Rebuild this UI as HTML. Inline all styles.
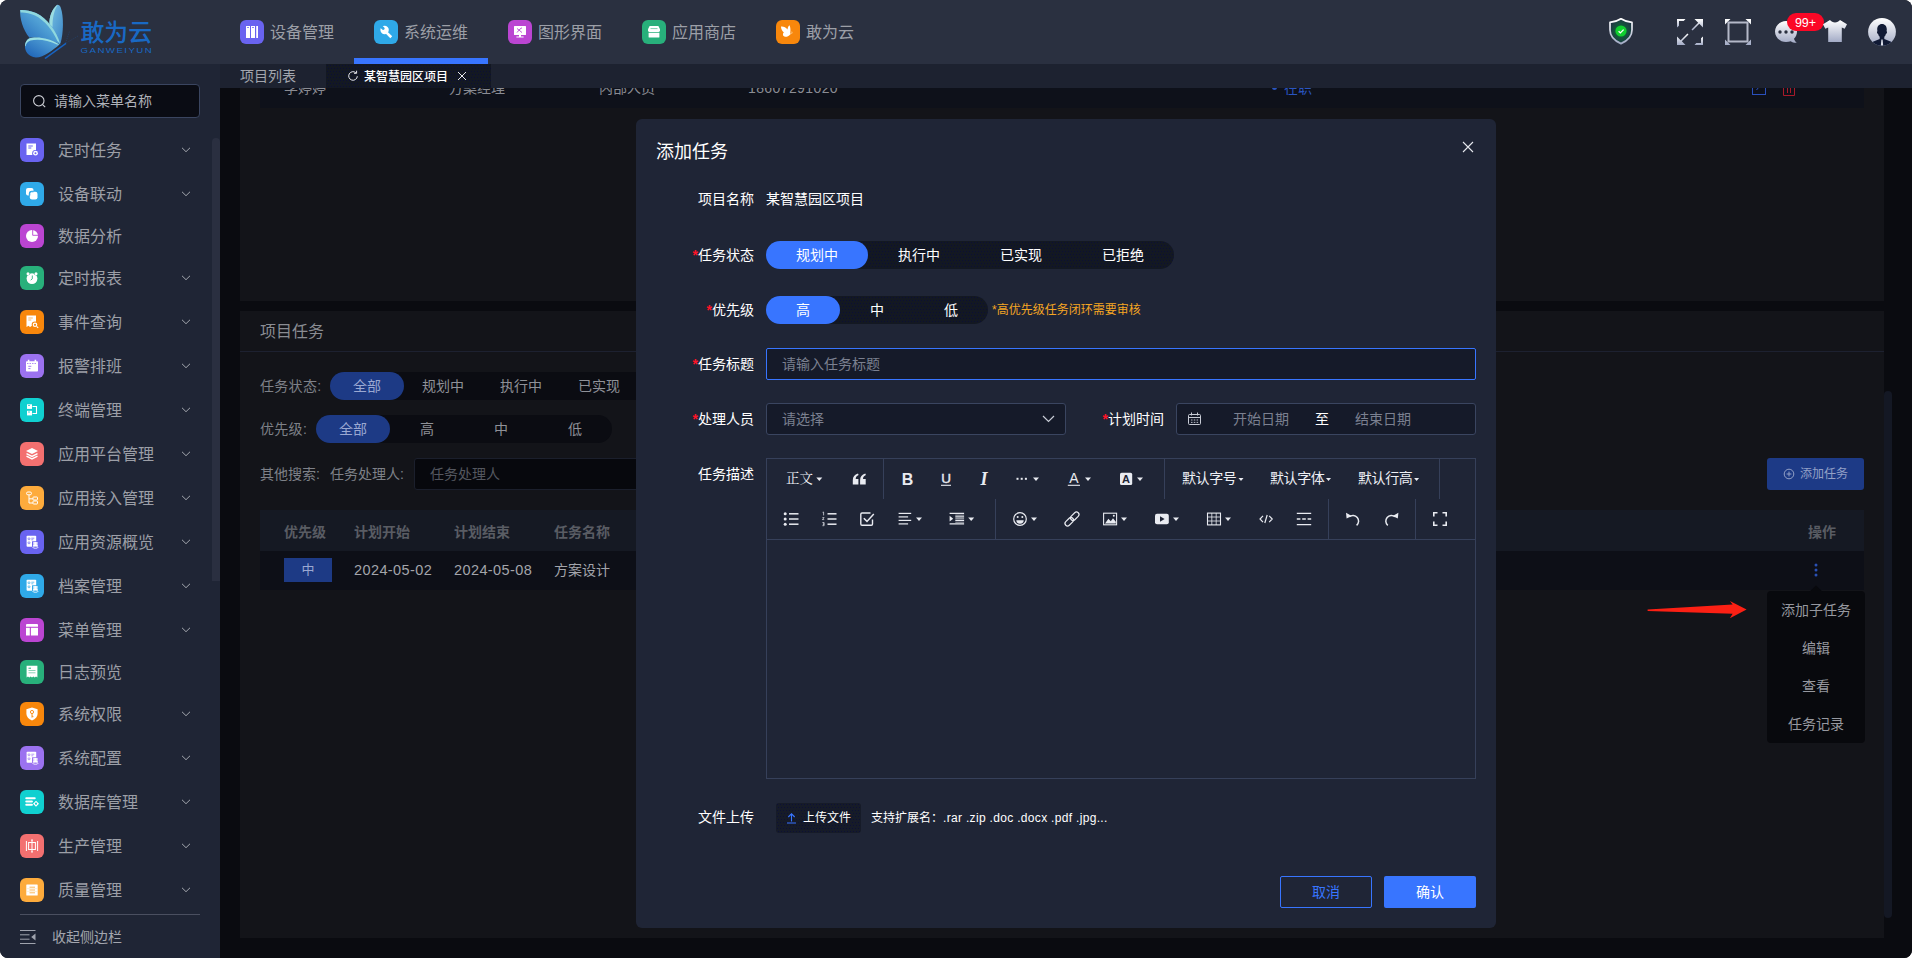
<!DOCTYPE html>
<html lang="zh-CN">
<head>
<meta charset="utf-8">
<title>敢为云 - 添加任务</title>
<style>
*{box-sizing:border-box;margin:0;padding:0}
html,body{width:1912px;height:958px;overflow:hidden;background:#fff}
body{font-family:"Liberation Sans","Noto Sans CJK SC",sans-serif;font-size:14px;color:#d5d7de;position:relative}
#app{position:absolute;left:0;top:0;width:1912px;height:958px;border-radius:8px;overflow:hidden;background:#0a0b10}
.abs{position:absolute}
/* header */
#hdr{position:absolute;left:0;top:0;width:1912px;height:64px;background:#2a3040}
.nav{position:absolute;top:0;height:64px;width:134px}
.nav .ic{position:absolute;left:20px;top:20px;width:24px;height:24px;border-radius:6px}
.nav .tx{position:absolute;left:50px;top:21px;height:24px;line-height:24px;font-size:16px;color:#9c9fa7;white-space:nowrap}
.nav.on:after{content:"";position:absolute;left:0;right:0;bottom:0;height:6px;background:#3875ff}
/* sidebar */
#side{position:absolute;left:0;top:64px;width:220px;height:894px;background:#1f2535}
.mi{position:absolute;left:0;width:212px;height:44px}
.mi .ic{position:absolute;left:20px;top:50%;margin-top:-12px;width:24px;height:24px;border-radius:6px}
.mi .ic svg{position:absolute;left:0;top:0;width:24px;height:24px}
.mi .tx{position:absolute;left:58px;top:50%;margin-top:-11px;height:24px;line-height:24px;font-size:16px;color:#9c9fa7;white-space:nowrap}
.mi .cv{position:absolute;left:181px;top:50%;margin-top:-3px;width:10px;height:6px}
/* tabs */
#tabs{position:absolute;left:220px;top:64px;width:1692px;height:24px;background:#1d2230}
/* content */
#main{position:absolute;left:220px;top:88px;width:1692px;height:870px;background:#0a0b10;overflow:hidden}
.panel{position:absolute;background:#131419}
.t{position:absolute;white-space:nowrap;line-height:20px;height:20px}
/* modal */
#modal{position:absolute;left:636px;top:119px;width:860px;height:809px;background:#1f2536;border-radius:6px}
.lbl{position:absolute;text-align:right;width:118px;left:0;font-size:14px;color:#fff;line-height:20px;height:20px;white-space:nowrap}
.lbl i{color:#ff1428;font-weight:bold;font-style:normal;font-family:"Liberation Sans",sans-serif}
.seg{position:absolute;height:28px;border-radius:14px;background-color:#131822;display:flex}
.seg span{display:block;height:28px;line-height:28px;text-align:center;font-size:14px;color:#fff;border-radius:14px}
.seg span.on{background:#3875ff}
.dots{background-image:radial-gradient(circle at .5px .5px,rgba(8,12,60,.7) .5px,rgba(8,12,60,0) .7px),radial-gradient(circle at .5px .5px,rgba(8,12,60,.7) .5px,rgba(8,12,60,0) .7px);background-size:3px 6px,3px 6px;background-position:1px 1px,2px 4px}
.seg.dim{background:#0b0c12;background-image:none}
.seg.dim span{color:#8f9198}
.seg.dim span.on{background:#1d3a85;color:#9aa8d2}
.th{color:#595c63;font-weight:bold}
.dd{left:1547px;width:98px;text-align:center;color:#96989f}
</style>
</head>
<body>
<div id="app">

<!-- ================= HEADER ================= -->
<div id="hdr">
  <svg id="logo" class="abs" style="left:0;top:0" width="170" height="64" viewBox="0 0 170 64">
    <defs>
      <linearGradient id="lg1" x1="0" y1="1" x2="1" y2="0"><stop offset="0" stop-color="#1f63b8"/><stop offset="0.55" stop-color="#4f9fd4"/><stop offset="1" stop-color="#74bfe0"/></linearGradient>
      <linearGradient id="lg2" x1="0" y1="0" x2="1" y2="1"><stop offset="0" stop-color="#79c3e2"/><stop offset="1" stop-color="#3b86c9"/></linearGradient>
      <linearGradient id="lg3" x1="0" y1="1" x2="1" y2="0"><stop offset="0" stop-color="#1a5fb6"/><stop offset="1" stop-color="#5fb0dc"/></linearGradient>
    </defs>
    <!-- right narrow wing -->
    <path d="M57 5C52 9 49 17 49.500 24 51 30 55 37 60.500 43.500 63.500 33 64 16 60.500 7 59.500 5 58 4.500 57 5Z" fill="url(#lg2)"/>
    <path d="M57 5C52 9 49 17 49.500 24L52.600 27C52.300 19 54 10 57.600 5.200Z" fill="#9bdde0"/>
    <!-- big left wing -->
    <path d="M20.200 10C19.500 18 23 30 29.500 37.800 38 36.800 50 39.500 60.500 44.600 57 32 47 18 36 13 30 10.500 24 9.600 20.200 10Z" fill="url(#lg1)"/>
    <path d="M20.2 10 C24 9.6 30 10.5 36 13 C47 18 57 32 60 43.5 L57.4 41 C53 31 45 20.5 35 15.6 C29.5 13 24 12.2 20.6 12.6Z" fill="#8fd8de"/>
    <!-- lower wing -->
    <path d="M25 45.5 C24.5 51 28 56.5 36 57.5 C44 57.5 53 50 59.5 44.5 C50 38 36 36 29 38.5 C26.5 40 25.2 42.5 25 45.5Z" fill="url(#lg3)"/>
    <path d="M25 45.5 C25.2 42.5 26.5 40 29 38.5 C36 36 50 38 59.5 44.5 L57 44.6 C48 39.8 37 38.6 30.5 40.6 C27.6 41.8 26 43.6 25.6 46.5Z" fill="#9adfe2"/>
    <!-- body -->
    <path d="M65.6 42.8 L66.4 44 L45.6 59 L44.4 57.9Z" fill="#1663c2"/>
    <path d="M65.5 43 L69.5 31.5 M65.8 43.2 L78 36" stroke="#1c5aa8" stroke-width="0.5" stroke-dasharray="1 1.2" fill="none" opacity=".7"/>
    <text x="80.5" y="41.400" font-family="'Liberation Sans','Noto Sans CJK SC',sans-serif" font-size="23.500" font-weight="500" fill="#1969c4" textLength="71.5" lengthAdjust="spacingAndGlyphs">敢为云</text>
    <text x="80.6" y="53.4" font-family="'Liberation Sans',sans-serif" font-size="8" fill="#1969c4" textLength="72.500" lengthAdjust="spacingAndGlyphs" letter-spacing="1.200">GANWEIYUN</text>
  </svg>

  <div class="nav" style="left:220px"><div class="ic" style="background:#6963f0"><svg width="24" height="24" viewBox="0 0 24 24"><path d="M6 6h4v12H6zM11 6h4v12h-4zM16.2 6h1.8v12h-1.8z" fill="#fff"/><path d="M7 7.3h2v.8H7zM12 7.3h2v.8h-2z" fill="#6963f0"/></svg></div><div class="tx">设备管理</div></div>
  <div class="nav on" style="left:354px"><div class="ic" style="background:#2fa9e8"><svg width="24" height="24" viewBox="0 0 24 24"><path d="M13.300 11.400l4.900 4.900-1.900 1.900-4.900-4.900z" fill="#fff"/><circle cx="10.600" cy="10" r="4.200" fill="#fff"/><path d="M10.200 7.600L6.500 3.900 4.500 5.900l3.700 3.700z" fill="#2fa9e8"/><circle cx="9.200" cy="8.600" r="1.400" fill="#2fa9e8"/></svg></div><div class="tx">系统运维</div></div>
  <div class="nav" style="left:488px"><div class="ic" style="background:#bb45d2"><svg width="24" height="24" viewBox="0 0 24 24"><path d="M6.6 6h10.8a.6.6 0 0 1 .6.6v7.8a.6.6 0 0 1-.6.6H13v1.4h2.6v1H8.400v-1H11V15H6.600a.6.600 0 0 1-.6-.6V6.600a.6.600 0 0 1 .6-.6z" fill="#fff"/><path d="M9 8.500l5 4M9 12.500l3-3.500 2-1.200" stroke="#c05ad8" stroke-width="1" fill="none"/></svg></div><div class="tx">图形界面</div></div>
  <div class="nav" style="left:622px"><div class="ic" style="background:#28b07b"><svg width="24" height="24" viewBox="0 0 24 24"><path d="M7.600 6h8.800l1.600 3.200v1.300c0 .8-.6 1.400-1.400 1.400H7.400c-.8 0-1.400-.6-1.400-1.400V9.200z" fill="#fff"/><path d="M6.600 12.700h10.800V17a.6.600 0 0 1-.6.600H7.200a.6.600 0 0 1-.6-.6z" fill="#fff"/><path d="M8.500 8.600h7" stroke="#7fd0b0" stroke-width="1"/></svg></div><div class="tx">应用商店</div></div>
  <div class="nav" style="left:756px"><div class="ic" style="background:#f8870c"><svg width="24" height="24" viewBox="0 0 24 24"><path d="M5 6.500c2.500-.3 5 1 6.500 3 .2-1.800.8-3.500 2-4.300 1 1.800 1.300 5.500.6 8.200l.9.400-.8.600c-1.500 1.700-3.500 2.700-5.200 2.400-1.600-.3-2.300-1.700-2-3 .1-.6.500-1 .9-1.300C6 11 5 8.800 5 6.500z" fill="#fff"/><path d="M14.800 13.600l1-2.200M15 13.800l2-1.400" stroke="#ffd8a0" stroke-width=".5" fill="none"/></svg></div><div class="tx">敢为云</div></div>
  <svg class="abs" style="left:1600px;top:0" width="312" height="64" viewBox="1600 0 312 64">
    <defs>
      <linearGradient id="gw" x1="0" y1="0" x2="0" y2="1"><stop offset="0" stop-color="#ffffff"/><stop offset="1" stop-color="#a3abc6"/></linearGradient>
      <radialGradient id="gg" cx="0.5" cy="0.5" r="0.5"><stop offset="0" stop-color="#0e8030"/><stop offset="0.45" stop-color="#125a3a"/><stop offset="1" stop-color="#1e3844"/></radialGradient>
    </defs>
    <!-- shield -->
    <path d="M1621 18.800C1618 20.800 1614 22 1610 22.400V30C1610 36.500 1614.500 40.800 1621 43.600 1627.500 40.800 1632 36.500 1632 30V22.400C1628 22 1624 20.800 1621 18.800Z" fill="url(#gg)" stroke="url(#gw)" stroke-width="1.700" stroke-linejoin="round"/>
    <circle cx="1621" cy="31" r="5.600" fill="#0fd02e"/>
    <path d="M1618.600 31.200l1.800 1.700 3.200-3.300" stroke="#fff" stroke-width="1.300" fill="none"/>
    <!-- expand -->
    <g fill="url(#gw)">
      <path d="M1677 19h8.500l-1.800 2h-4.700v4.700l-2 1.800z"/>
      <path d="M1703 19V27.500L1699.300 23.800 1692.600 30.500 1691.500 29.400 1698.200 22.700 1694.500 19Z"/>
      <path d="M1677 45V36.500L1680.700 40.200 1687.400 33.500 1688.500 34.600 1681.800 41.300 1685.500 45Z"/>
      <path d="M1703 45h-8.500l1.800-2h4.700v-4.700l2-1.800z"/>
    </g>
    <!-- square -->
    <g fill="url(#gw)">
      <path d="M1725 19h5.500l-5.500 5.500zM1751 19v5.500l-5.500-5.500zM1725 45v-5.500l5.500 5.500zM1751 45h-5.500l5.500-5.500z"/>
    </g>
    <rect x="1728.500" y="22.500" width="19" height="19" fill="#2a3040" stroke="#b4b8c8" stroke-width="2"/>
    <!-- chat -->
    <path d="M1786 21c6.100 0 11 4.700 11 10.500 0 2.800-1.100 5.300-3 7.200.5 1.700 1.500 3.100 2.800 4.100-2.300.2-4.400-.4-6-1.600-1.500.5-3.100.8-4.800.8-6.100 0-11-4.700-11-10.500S1779.900 21 1786 21z" fill="url(#gw)"/>
    <circle cx="1780" cy="32" r="1.700" fill="#2a3040"/><circle cx="1786" cy="32" r="1.700" fill="#2a3040"/><circle cx="1792" cy="32" r="1.700" fill="#2a3040"/>
    <rect x="1787" y="13" width="37" height="18" rx="9" fill="#fb0826"/>
    <text x="1805.500" y="27.100" font-family="'Liberation Sans',sans-serif" font-size="12.500" fill="#fff" text-anchor="middle">99+</text>
    <!-- tshirt -->
    <path d="M1830 20c1.200 1.600 3 2.400 5 2.400s3.800-.8 5-2.400l7 4.200-2.300 4.600-2.900-1.400V42h-13.600V27.400l-2.900 1.400-2.300-4.600z" fill="url(#gw)"/>
    <!-- avatar -->
    <circle cx="1882" cy="31.800" r="13.900" fill="url(#gw)"/>
    <clipPath id="avc"><circle cx="1882" cy="31.800" r="13.900"/></clipPath>
    <g clip-path="url(#avc)" fill="#111a35">
      <path d="M1882 24c3 0 4.800 2.300 4.800 5.200 0 .7-.1 1.400-.3 2 .5.100.7.700.5 1.400-.2.800-.6 1.300-1.100 1.300-.3 1.200-.9 2.200-1.600 2.900v2.100l6.800 2.800c1.400.6 2.100 1.700 2.100 3.200V48h-22.400v-3.100c0-1.500.7-2.600 2.100-3.200l6.800-2.800v-2.100c-.7-.7-1.300-1.700-1.600-2.900-.5 0-.9-.5-1.100-1.300-.2-.7 0-1.300.5-1.400-.2-.6-.3-1.300-.3-2 0-2.900 1.800-5.200 4.800-5.200z"/>
    </g>
    <path d="M1881.400 39.500h1.200l.5 5.500-1.100 1.200-1.100-1.200z" fill="#dfe3ee" clip-path="url(#avc)"/>
  </svg>
</div>

<!-- ================= SIDEBAR ================= -->
<div id="side">
  <div class="abs" style="left:20px;top:20px;width:180px;height:34px;background:#0a0c14;border:1px solid #3a4560;border-radius:4px">
    <svg class="abs" style="left:11px;top:9px" width="15" height="15" viewBox="0 0 15 15"><circle cx="6.800" cy="6.800" r="5.200" fill="none" stroke="#d0d2d8" stroke-width="1.100"/><path d="M10.600 10.600l2.600 2.600" stroke="#d0d2d8" stroke-width="1.100"/></svg>
    <div class="t" style="left:33px;top:6px;font-size:14px;color:#b0b3bb">请输入菜单名称</div>
  </div>
  <div class="mi" style="top:64px;height:44px"><div class="ic" style="background:#6963f0"><svg viewBox="0 0 24 24"><path d="M6.500 5.600h9.500v11.400l-2-1.300-2 1.300h-3.500l-2 .0z" fill="#fff"/><path d="M8.300 8h4.500M8.300 10h3" stroke="#6963f0" stroke-width="1"/><circle cx="15.500" cy="15.200" r="3.300" fill="#6963f0"/><circle cx="15.500" cy="15.200" r="2.400" fill="#fff"/><circle cx="15.500" cy="15.200" r="1" fill="#6963f0"/></svg></div><div class="tx">定时任务</div><svg class="cv" viewBox="0 0 10 6"><path d="M1 .8l4 3.900 4-3.900" fill="none" stroke="#a3a6ae" stroke-width="1"/></svg></div>
  <div class="mi" style="top:108px;height:44px"><div class="ic" style="background:#2fa9e8"><svg viewBox="0 0 24 24"><rect x="6" y="6" width="7.500" height="7.500" rx="2" fill="#fff"/><rect x="8.800" y="8.800" width="9.200" height="9.200" rx="3" fill="#2fa9e8"/><rect x="9.800" y="9.800" width="7.700" height="7.700" rx="2.200" fill="#fff"/><path d="M9.800 13.500v-2.200a1.500 1.500 0 0 1 1.500-1.500h2.200" stroke="#2fa9e8" stroke-width=".9" fill="none"/></svg></div><div class="tx">设备联动</div><svg class="cv" viewBox="0 0 10 6"><path d="M1 .8l4 3.900 4-3.900" fill="none" stroke="#a3a6ae" stroke-width="1"/></svg></div>
  <div class="mi" style="top:152px;height:40px"><div class="ic" style="background:#bb45d2"><svg viewBox="0 0 24 24"><circle cx="12" cy="12" r="6" fill="#fff"/><path d="M12.700 5.500v5.800h5.800" stroke="#bb45d2" stroke-width=".9" fill="none"/></svg></div><div class="tx">数据分析</div></div>
  <div class="mi" style="top:192px;height:44px"><div class="ic" style="background:#28b07b"><svg viewBox="0 0 24 24"><circle cx="12" cy="12.600" r="5.400" fill="#fff"/><circle cx="8" cy="7.800" r="1.500" fill="#fff"/><circle cx="16" cy="7.800" r="1.500" fill="#fff"/><path d="M12.300 9.500v3.300l-1.600 1.300" stroke="#28b07b" stroke-width=".9" fill="none"/><path d="M8.600 9.300l1-1M15.400 9.300l-1-1" stroke="#28b07b" stroke-width=".7"/></svg></div><div class="tx">定时报表</div><svg class="cv" viewBox="0 0 10 6"><path d="M1 .8l4 3.900 4-3.900" fill="none" stroke="#a3a6ae" stroke-width="1"/></svg></div>
  <div class="mi" style="top:236px;height:44px"><div class="ic" style="background:#f8870c"><svg viewBox="0 0 24 24"><path d="M6.500 5.600h9.500v11.400h-2.500l-1.500-1.300-2 1.300-1.500-1.300-2 1.300z" fill="#fff"/><path d="M8.300 8h4.500M8.300 10h3" stroke="#fbb76a" stroke-width="1"/><circle cx="15" cy="14.800" r="3.300" fill="#f8870c"/><circle cx="15" cy="14.800" r="2.300" fill="#fff"/><circle cx="15" cy="14.800" r="1.100" fill="#f8870c"/><path d="M16.600 16.400l1.600 1.500" stroke="#fff" stroke-width="1.100"/></svg></div><div class="tx">事件查询</div><svg class="cv" viewBox="0 0 10 6"><path d="M1 .8l4 3.900 4-3.900" fill="none" stroke="#a3a6ae" stroke-width="1"/></svg></div>
  <div class="mi" style="top:280px;height:44px"><div class="ic" style="background:#9b72f0"><svg viewBox="0 0 24 24"><rect x="6" y="7.300" width="12" height="10.200" rx=".8" fill="#fff"/><path d="M8.600 5.800v2.500M15.400 5.800v2.500" stroke="#fff" stroke-width="1.600"/><path d="M7 9.500h10" stroke="#9b72f0" stroke-width=".8" stroke-dasharray="1.500 1"/><path d="M8.300 12.300h3M8.300 14.600h2.200" stroke="#9b72f0" stroke-width=".9"/></svg></div><div class="tx">报警排班</div><svg class="cv" viewBox="0 0 10 6"><path d="M1 .8l4 3.900 4-3.900" fill="none" stroke="#a3a6ae" stroke-width="1"/></svg></div>
  <div class="mi" style="top:324px;height:44px"><div class="ic" style="background:#10d0d0"><svg viewBox="0 0 24 24"><rect x="7" y="6.300" width="5" height="4.600" fill="#fff"/><rect x="7" y="12.800" width="5" height="4.600" fill="#fff"/><path d="M12.500 8.500h4v7h-4" stroke="#fff" stroke-width="1.100" fill="none"/><path d="M8 7.500h2M8 14h2" stroke="#10d0d0" stroke-width=".8"/></svg></div><div class="tx">终端管理</div><svg class="cv" viewBox="0 0 10 6"><path d="M1 .8l4 3.900 4-3.900" fill="none" stroke="#a3a6ae" stroke-width="1"/></svg></div>
  <div class="mi" style="top:368px;height:44px"><div class="ic" style="background:#f37070"><svg viewBox="0 0 24 24"><path d="M12 6l6 3-6 3-6-3z" fill="#fff"/><path d="M6.500 11.600L12 14.400l5.500-2.800M6.500 14.200L12 17l5.500-2.800" stroke="#fff" stroke-width="1.500" fill="none"/></svg></div><div class="tx">应用平台管理</div><svg class="cv" viewBox="0 0 10 6"><path d="M1 .8l4 3.900 4-3.900" fill="none" stroke="#a3a6ae" stroke-width="1"/></svg></div>
  <div class="mi" style="top:412px;height:44px"><div class="ic" style="background:#fdab3c"><svg viewBox="0 0 24 24"><rect x="6.500" y="6" width="5" height="2.800" rx="1.400" fill="none" stroke="#fff" stroke-width="1"/><path d="M9 9v8h4M9 12.800h4" stroke="#fff" stroke-width="1" fill="none"/><rect x="13" y="11" width="4.500" height="3" rx=".6" fill="none" stroke="#fff" stroke-width="1"/><rect x="13" y="15" width="4.500" height="3" rx=".6" fill="none" stroke="#fff" stroke-width="1"/></svg></div><div class="tx">应用接入管理</div><svg class="cv" viewBox="0 0 10 6"><path d="M1 .8l4 3.900 4-3.900" fill="none" stroke="#a3a6ae" stroke-width="1"/></svg></div>
  <div class="mi" style="top:456px;height:44px"><div class="ic" style="background:#6963f0"><svg viewBox="0 0 24 24"><rect x="6.600" y="5.800" width="9.600" height="11" rx=".8" fill="#fff"/><circle cx="9" cy="8.800" r="1" fill="none" stroke="#6963f0" stroke-width=".7"/><circle cx="9" cy="12.800" r="1" fill="none" stroke="#6963f0" stroke-width=".7"/><path d="M11.300 8.200h3M11.300 9.800h2" stroke="#6963f0" stroke-width=".7"/><rect x="12" y="11.300" width="6.600" height="7.300" fill="#6963f0"/><ellipse cx="15.400" cy="13" rx="2.600" ry="1.100" fill="#fff"/><ellipse cx="15.400" cy="15.200" rx="2.600" ry="1.100" fill="#fff"/><ellipse cx="15.400" cy="17.200" rx="2.600" ry="1.100" fill="none" stroke="#fff" stroke-width=".8"/></svg></div><div class="tx">应用资源概览</div><svg class="cv" viewBox="0 0 10 6"><path d="M1 .8l4 3.900 4-3.900" fill="none" stroke="#a3a6ae" stroke-width="1"/></svg></div>
  <div class="mi" style="top:500px;height:44px"><div class="ic" style="background:#2fa9e8"><svg viewBox="0 0 24 24"><rect x="6.600" y="5.800" width="9.600" height="11" rx=".8" fill="#fff"/><circle cx="9" cy="8.800" r="1" fill="none" stroke="#2fa9e8" stroke-width=".7"/><circle cx="9" cy="12.800" r="1" fill="none" stroke="#2fa9e8" stroke-width=".7"/><path d="M11.300 8.200h3M11.300 9.800h2" stroke="#2fa9e8" stroke-width=".7"/><rect x="12" y="11.300" width="6.600" height="7.300" fill="#2fa9e8"/><ellipse cx="15.400" cy="13" rx="2.600" ry="1.100" fill="#fff"/><ellipse cx="15.400" cy="15.200" rx="2.600" ry="1.100" fill="#fff"/><ellipse cx="15.400" cy="17.200" rx="2.600" ry="1.100" fill="none" stroke="#fff" stroke-width=".8"/></svg></div><div class="tx">档案管理</div><svg class="cv" viewBox="0 0 10 6"><path d="M1 .8l4 3.900 4-3.900" fill="none" stroke="#a3a6ae" stroke-width="1"/></svg></div>
  <div class="mi" style="top:544px;height:44px"><div class="ic" style="background:#bb45d2"><svg viewBox="0 0 24 24"><path d="M7 6h10a1 1 0 0 1 1 1v1.700H6V7a1 1 0 0 1 1-1z" fill="#fff"/><rect x="6" y="9.800" width="3.800" height="7.700" fill="#fff"/><rect x="10.900" y="9.800" width="7.100" height="7.700" fill="#fff"/></svg></div><div class="tx">菜单管理</div><svg class="cv" viewBox="0 0 10 6"><path d="M1 .8l4 3.900 4-3.900" fill="none" stroke="#a3a6ae" stroke-width="1"/></svg></div>
  <div class="mi" style="top:588px;height:40px"><div class="ic" style="background:#28b07b"><svg viewBox="0 0 24 24"><path d="M6.600 5.800h10.800v11.800l-1.350-1-1.350 1-1.350-1-1.350 1-1.350-1-1.350 1-1.350-1-1.350 1z" fill="#fff"/><path d="M8.500 8.200h2.500" stroke="#28b07b" stroke-width="1"/><path d="M8.500 10.500h7M8.500 12.800h7" stroke="#7fcfb0" stroke-width=".9"/></svg></div><div class="tx">日志预览</div></div>
  <div class="mi" style="top:628px;height:44px"><div class="ic" style="background:#f8870c"><svg viewBox="0 0 24 24"><path d="M12 5.600l5.600 1.700v4.500c0 3-2.200 5.300-5.600 6.700-3.400-1.400-5.600-3.700-5.600-6.700V7.300z" fill="#fff"/><circle cx="12" cy="10" r="1.600" fill="none" stroke="#f8870c" stroke-width=".9"/><path d="M12 11.600v4M12 14l1.400.6" stroke="#f8870c" stroke-width=".9" fill="none"/></svg></div><div class="tx">系统权限</div><svg class="cv" viewBox="0 0 10 6"><path d="M1 .8l4 3.900 4-3.900" fill="none" stroke="#a3a6ae" stroke-width="1"/></svg></div>
  <div class="mi" style="top:672px;height:44px"><div class="ic" style="background:#9b72f0"><svg viewBox="0 0 24 24"><rect x="6.600" y="5.800" width="9.600" height="11" rx=".8" fill="#fff"/><circle cx="9" cy="8.800" r="1" fill="none" stroke="#9b72f0" stroke-width=".7"/><circle cx="9" cy="12.800" r="1" fill="none" stroke="#9b72f0" stroke-width=".7"/><path d="M11.300 8.200h3M11.300 9.800h2" stroke="#9b72f0" stroke-width=".7"/><rect x="12" y="11.300" width="6.600" height="7.300" fill="#9b72f0"/><ellipse cx="15.400" cy="13" rx="2.600" ry="1.100" fill="#fff"/><ellipse cx="15.400" cy="15.200" rx="2.600" ry="1.100" fill="#fff"/><ellipse cx="15.400" cy="17.200" rx="2.600" ry="1.100" fill="none" stroke="#fff" stroke-width=".8"/></svg></div><div class="tx">系统配置</div><svg class="cv" viewBox="0 0 10 6"><path d="M1 .8l4 3.900 4-3.900" fill="none" stroke="#a3a6ae" stroke-width="1"/></svg></div>
  <div class="mi" style="top:716px;height:44px"><div class="ic" style="background:#10d0d0"><svg viewBox="0 0 24 24"><path d="M6.300 8.300h8.400M6.300 11.500h5.600M6.300 14.700h5.600" stroke="#fff" stroke-width="2.100" stroke-linecap="round"/><path d="M16 10.700l3 3-3 3-3-3z" fill="#fff"/><circle cx="16" cy="13.700" r="1.100" fill="#10d0d0"/></svg></div><div class="tx">数据库管理</div><svg class="cv" viewBox="0 0 10 6"><path d="M1 .8l4 3.900 4-3.900" fill="none" stroke="#a3a6ae" stroke-width="1"/></svg></div>
  <div class="mi" style="top:760px;height:44px"><div class="ic" style="background:#f37070"><svg viewBox="0 0 24 24"><path d="M6.400 7v10M17.600 7v10" stroke="#fff" stroke-width="1"/><rect x="8.600" y="8.500" width="6.800" height="7" fill="none" stroke="#fff" stroke-width="1"/><path d="M12 5.500v13" stroke="#fff" stroke-width="1"/><path d="M10.800 6.600L12 5.200l1.200 1.400zM10.800 17.400L12 18.800l1.200-1.400z" fill="#fff"/></svg></div><div class="tx">生产管理</div><svg class="cv" viewBox="0 0 10 6"><path d="M1 .8l4 3.900 4-3.900" fill="none" stroke="#a3a6ae" stroke-width="1"/></svg></div>
  <div class="mi" style="top:804px;height:44px"><div class="ic" style="background:#fdab3c"><svg viewBox="0 0 24 24"><rect x="6.300" y="6.400" width="11.400" height="11.200" rx=".6" fill="#fff"/><path d="M9.500 9.200h5.500M9.500 12h5.500M9.500 14.800h5.500" stroke="#fcb95c" stroke-width="1"/><path d="M6.300 10.600h11.400M6.300 13.400h11.400" stroke="#fde0b0" stroke-width=".5"/></svg></div><div class="tx">质量管理</div><svg class="cv" viewBox="0 0 10 6"><path d="M1 .8l4 3.900 4-3.900" fill="none" stroke="#a3a6ae" stroke-width="1"/></svg></div>
  <div class="abs" style="left:212px;top:74px;width:8px;height:443px;background:#2a2f40;border-radius:4px 4px 0 0"></div>
  <div class="abs" style="left:20px;top:850px;width:180px;height:1px;background:#4a4f60"></div>
  <svg class="abs" style="left:20px;top:865px" width="16" height="16" viewBox="0 0 16 16"><path d="M0 1.500h15.500M0 5.800h9.500M0 10.200h9.500M0 14.500h15.500" stroke="#9fa3ad" stroke-width="1"/><path d="M15.500 4.500v7L11.200 8z" fill="#9fa3ad"/></svg>
  <div class="t" style="left:52px;top:863px;font-size:14px;color:#a3a6ae">收起侧边栏</div>
</div>

<!-- ================= TABS ================= -->
<div id="tabs">
  <div class="t" style="left:20px;top:2px;font-size:14px;color:#a3a6ae">项目列表</div>
  <div class="abs dots" style="left:106px;top:0;width:165px;height:24px;background-color:#131822"></div>
  <svg class="abs" style="left:127px;top:6px" width="12" height="12" viewBox="0 0 12 12"><path d="M10.300 6.200a4.300 4.300 0 1 1-1.500-3.500" fill="none" stroke="#e8e9ee" stroke-width="1"/><path d="M7 3.300h2.600V.7" fill="none" stroke="#e8e9ee" stroke-width="1"/></svg>
  <div class="t" style="left:144px;top:3px;font-size:12px;color:#fff;font-weight:500">某智慧园区项目</div>
  <svg class="abs" style="left:237px;top:7px" width="10" height="10" viewBox="0 0 10 10"><path d="M1 1l8 8M9 1l-8 8" stroke="#e8e9ee" stroke-width="1"/></svg>
</div>

<!-- ================= MAIN ================= -->
<div id="main">
  <div class="panel" style="left:20px;top:0;width:1644px;height:213px"></div>
  <div class="abs" style="left:40px;top:-20px;width:1604px;height:40px;background:#0e111a"></div>
  <div class="t" style="left:64px;top:-10px;color:#8a8c93">李婷婷</div>
  <div class="t" style="left:229px;top:-10px;color:#8a8c93">方案经理</div>
  <div class="t" style="left:379px;top:-10px;color:#8a8c93">内部人员</div>
  <div class="t" style="left:528px;top:-10px;color:#8a8c93;letter-spacing:.4px">18607291020</div>
  <div class="abs" style="left:1052px;top:-3px;width:5px;height:5px;border-radius:50%;background:#2a55c0"></div><div class="t" style="left:1064px;top:-10px;color:#2a55c0;font-size:14px">在职</div>
  <svg class="abs" style="left:1531px;top:-8px" width="16" height="16" viewBox="0 0 16 16"><rect x="1.500" y="1.500" width="13" height="13" fill="none" stroke="#2a50bc" stroke-width="1"/><path d="M5.500 10l5-6" stroke="#2a50bc" stroke-width="1"/></svg>
  <svg class="abs" style="left:1562px;top:-7px" width="14" height="16" viewBox="0 0 14 16"><path d="M1 3.500h12M1.500 3.500v11h11v-11" fill="none" stroke="#a81a2a" stroke-width="1"/><path d="M5.500 6v6M8.500 6v6" stroke="#a81a2a" stroke-width="1"/></svg>

  <div class="panel" style="left:20px;top:223px;width:1644px;height:627px"></div>
  <div class="t" style="left:40px;top:232px;font-size:16px;line-height:24px;height:24px;color:#8a8c92">项目任务</div>
  <div class="abs" style="left:20px;top:263px;width:1644px;height:1px;background:#1d2130"></div>

  <div class="t" style="left:40px;top:288px;color:#7e8188;letter-spacing:.3px">任务状态:</div>
  <div class="seg dim" style="left:110px;top:284px;width:560px">
    <span class="on" style="width:74px">全部</span><span style="width:78px">规划中</span><span style="width:78px">执行中</span><span style="width:78px">已实现</span><span style="width:78px">已拒绝</span>
  </div>
  <div class="t" style="left:40px;top:331px;color:#7e8188;letter-spacing:.3px">优先级:</div>
  <div class="seg dim" style="left:96px;top:327px;width:296px">
    <span class="on" style="width:74px">全部</span><span style="width:74px">高</span><span style="width:74px">中</span><span style="width:74px">低</span>
  </div>
  <div class="t" style="left:40px;top:376px;color:#7e8188">其他搜索:</div>
  <div class="t" style="left:110px;top:376px;color:#7e8188">任务处理人:</div>
  <div class="abs" style="left:194px;top:370px;width:300px;height:32px;background:#07080d;border:1px solid #1b1f2c;border-radius:3px"></div>
  <div class="t" style="left:210px;top:376px;color:#54575f">任务处理人</div>

  <div class="abs" style="left:1547px;top:370px;width:97px;height:32px;background:#1d3a86;border-radius:3px"></div>
  <svg class="abs" style="left:1563px;top:380px" width="12" height="12" viewBox="0 0 12 12"><circle cx="6" cy="6" r="4.800" fill="none" stroke="#93a0c6" stroke-width="1"/><path d="M3.600 6h4.800M6 3.600v4.800" stroke="#93a0c6" stroke-width="1"/></svg>
  <div class="t" style="left:1580px;top:376px;font-size:12px;color:#93a0c6">添加任务</div>

  <div class="abs" style="left:40px;top:422px;width:1604px;height:41px;background:#151923"></div>
  <div class="t th" style="left:64px;top:434px">优先级</div>
  <div class="t th" style="left:134px;top:434px">计划开始</div>
  <div class="t th" style="left:234px;top:434px">计划结束</div>
  <div class="t th" style="left:334px;top:434px">任务名称</div>
  <div class="t th" style="left:1588px;top:434px">操作</div>
  <div class="abs" style="left:40px;top:463px;width:1604px;height:39px;background:#0d0f17"></div>
  <div class="abs" style="left:64px;top:470px;width:48px;height:24px;background:#1d3a85;color:#9aa8d2;font-size:13px;line-height:24px;text-align:center">中</div>
  <div class="t" style="left:134px;top:472px;color:#a3a5ab;font-size:14.500px;letter-spacing:.4px">2024-05-02</div>
  <div class="t" style="left:234px;top:472px;color:#a3a5ab;font-size:14.500px;letter-spacing:.4px">2024-05-08</div>
  <div class="t" style="left:334px;top:472px;color:#a3a5ab">方案设计</div>
  <svg class="abs" style="left:1594px;top:475px" width="4" height="14" viewBox="0 0 4 14"><circle cx="2" cy="2" r="1.500" fill="#2a50b4"/><circle cx="2" cy="7" r="1.500" fill="#2a50b4"/><circle cx="2" cy="12" r="1.500" fill="#2a50b4"/></svg>

  <!-- dropdown -->
  <div class="abs" style="left:1547px;top:503px;width:98px;height:152px;background:#08090d;border-radius:4px"></div>
  <svg class="abs" style="left:1589px;top:497px" width="14" height="7" viewBox="0 0 14 7"><path d="M0 7l7-6.500L14 7z" fill="#08090d"/></svg>
  <div class="t dd" style="top:512px">添加子任务</div>
  <div class="t dd" style="top:550px">编辑</div>
  <div class="t dd" style="top:588px">查看</div>
  <div class="t dd" style="top:626px">任务记录</div>
  <!-- red arrow -->
  <svg class="abs" style="left:1424px;top:510px" width="106" height="24" viewBox="1644 598 106 24"><path d="M1647.600 609.400L1732.600 604.600 1729.900 600.900 1746.600 609.500 1729.900 618.200 1732.600 613.800 1647.600 611z" fill="#fc2014"/></svg>

  <!-- scrollbar -->
  <div class="abs" style="left:1664px;top:303px;width:8px;height:527px;background:#141824;border-radius:4px"></div>
</div>

<!-- ================= MODAL ================= -->
<div id="modal">
  <div class="t" style="left:20px;top:20px;font-size:18px;line-height:26px;height:26px;color:#fff">添加任务</div>
  <svg class="abs" style="left:826px;top:22px" width="12" height="12" viewBox="0 0 12 12"><path d="M1 1l10 10M11 1L1 11" stroke="#e6e8ee" stroke-width="1.100"/></svg>
  <div class="lbl" style="top:70px;left:0px;width:118px">项目名称</div>
  <div class="t" style="left:130px;top:70px;color:#fff">某智慧园区项目</div>
  <div class="lbl" style="top:126px;left:0px;width:118px"><i>*</i>任务状态</div>
  <div class="seg dots" style="left:130px;top:122px;width:408px"><span class="on" style="width:102px">规划中</span><span style="width:102px">执行中</span><span style="width:102px">已实现</span><span style="width:102px">已拒绝</span></div>
  <div class="lbl" style="top:181px;left:0px;width:118px"><i>*</i>优先级</div>
  <div class="seg dots" style="left:130px;top:177px;width:222px"><span class="on" style="width:74px">高</span><span style="width:74px">中</span><span style="width:74px">低</span></div>
  <div class="t" style="left:356px;top:181px;font-size:12px;color:#f5a623">*高优先级任务闭环需要审核</div>
  <div class="lbl" style="top:235px;left:0px;width:118px"><i>*</i>任务标题</div>
  <div class="abs" style="left:130px;top:229px;width:710px;height:32px;background:#151a29;border:1px solid #3875ff;border-radius:2px"></div>
  <div class="t" style="left:146px;top:235px;color:#7b8090">请输入任务标题</div>
  <div class="lbl" style="top:290px;left:0px;width:118px"><i>*</i>处理人员</div>
  <div class="abs" style="left:130px;top:284px;width:300px;height:32px;background:#151a29;border:1px solid #3a4560;border-radius:3px"></div>
  <div class="t" style="left:146px;top:290px;color:#7b8090">请选择</div>
  <svg class="abs" style="left:406px;top:296px" width="13" height="8" viewBox="0 0 13 8"><path d="M1 1l5.500 5.500L12 1" fill="none" stroke="#c8ccd6" stroke-width="1.200"/></svg>
  <div class="lbl" style="top:290px;left:410px;width:118px"><i>*</i>计划时间</div>
  <div class="abs" style="left:540px;top:284px;width:300px;height:32px;background:#151a29;border:1px solid #3a4560;border-radius:3px"></div>
  <svg class="abs" style="left:551px;top:293px" width="14" height="14" viewBox="0 0 14 14"><rect x="1.500" y="2.500" width="12" height="10" rx="1" fill="none" stroke="#c8ccd6" stroke-width="1"/><path d="M1.500 5.500h12M4.500 .5v3M10.500 .5v3" stroke="#c8ccd6" stroke-width="1"/><path d="M4 8h1.500M6.800 8h1.500M9.600 8h1.500M4 10.400h1.500M6.800 10.400h1.500M9.600 10.400h1.500" stroke="#c8ccd6" stroke-width=".9"/></svg>
  <div class="t" style="left:575px;top:290px;width:100px;text-align:center;color:#7b8090">开始日期</div>
  <div class="t" style="left:676px;top:290px;width:20px;text-align:center;color:#fff">至</div>
  <div class="t" style="left:697px;top:290px;width:100px;text-align:center;color:#7b8090">结束日期</div>
  <div class="lbl" style="top:345px;left:0px;width:118px">任务描述</div>
  <div class="abs" style="left:130px;top:339px;width:710px;height:321px;border:1px solid #36405a"></div>
  <div class="abs" style="left:130px;top:420px;width:710px;height:1px;background:#36405a"></div>
  <svg class="abs" style="left:130px;top:339px" width="710" height="82" viewBox="766 458 710 82"><path d="M883.5 459V499" stroke="#36405a" stroke-width="1"/><path d="M1164.5 459V499" stroke="#36405a" stroke-width="1"/><path d="M1439.5 459V499" stroke="#36405a" stroke-width="1"/><path d="M995.5 499V539" stroke="#36405a" stroke-width="1"/><path d="M1328.5 499V539" stroke="#36405a" stroke-width="1"/><path d="M1415.5 499V539" stroke="#36405a" stroke-width="1"/><path d="M816.3 477.4h6l-3 3.600z" fill="#e9ebf1"/><path d="M1033.0 477.4h6l-3 3.600z" fill="#e9ebf1"/><path d="M1085.0 477.4h6l-3 3.600z" fill="#e9ebf1"/><path d="M1137.0 477.4h6l-3 3.600z" fill="#e9ebf1"/><path d="M1238.5 477.9h5l-2.500 3z" fill="#e9ebf1"/><path d="M1326.0 477.9h5l-2.500 3z" fill="#e9ebf1"/><path d="M1414.1 477.9h5l-2.500 3z" fill="#e9ebf1"/><path d="M916.0 517.4h6l-3 3.600z" fill="#e9ebf1"/><path d="M968.2 517.4h6l-3 3.600z" fill="#e9ebf1"/><path d="M1031.0 517.4h6l-3 3.600z" fill="#e9ebf1"/><path d="M1121.0 517.4h6l-3 3.600z" fill="#e9ebf1"/><path d="M1173.0 517.4h6l-3 3.600z" fill="#e9ebf1"/><path d="M1225.0 517.4h6l-3 3.600z" fill="#e9ebf1"/><path d="M852.8 484.600h5.600v-5.600h-2.700c.1-1.900 1-3.200 2.900-3.900l-.6-1.600c-3.400.9-5.200 3.200-5.200 6.800z" fill="#e9ebf1"/><path d="M860.1 484.600h5.600v-5.600h-2.700c.1-1.900 1-3.200 2.900-3.900l-.6-1.600c-3.400.9-5.200 3.200-5.200 6.800z" fill="#e9ebf1"/><text x="907.5" y="485" font-family="'Liberation Sans',sans-serif" font-weight="bold" font-size="16" text-anchor="middle" fill="#e9ebf1">B</text><text x="946" y="483" font-family="'Liberation Sans',sans-serif" font-size="13.500" text-anchor="middle" fill="#e9ebf1" stroke="#e9ebf1" stroke-width=".4">U</text><path d="M941 485.300h10" stroke="#e9ebf1" stroke-width="1.100"/><text x="984" y="485" font-family="'Liberation Serif',serif" font-weight="bold" font-style="italic" font-size="18" text-anchor="middle" fill="#e9ebf1">I</text><rect x="1016.5" y="477.800" width="2" height="2" fill="#e9ebf1"/><rect x="1020.7" y="477.800" width="2" height="2" fill="#e9ebf1"/><rect x="1024.9" y="477.800" width="2" height="2" fill="#e9ebf1"/><text x="1074" y="483.200" font-family="'Liberation Sans',sans-serif" font-size="14" text-anchor="middle" fill="#e9ebf1">A</text><path d="M1067.800 485.300h12.200" stroke="#e9ebf1" stroke-width="1.100"/><rect x="1120" y="472.800" width="12.200" height="12.200" rx="1.600" fill="#e9ebf1"/><text x="1126.100" y="483.300" font-family="'Liberation Sans',sans-serif" font-weight="bold" font-size="11" text-anchor="middle" fill="#1f2536">A</text><circle cx="785.200" cy="513.8" r="1.500" fill="#e9ebf1"/><path d="M789 513.8h9.500" stroke="#e9ebf1" stroke-width="1.500"/><circle cx="785.200" cy="519" r="1.500" fill="#e9ebf1"/><path d="M789 519h9.500" stroke="#e9ebf1" stroke-width="1.500"/><circle cx="785.200" cy="524.2" r="1.500" fill="#e9ebf1"/><path d="M789 524.2h9.500" stroke="#e9ebf1" stroke-width="1.500"/><path d="M827.500 513.8h9" stroke="#e9ebf1" stroke-width="1.500"/><path d="M827.500 519h9" stroke="#e9ebf1" stroke-width="1.500"/><path d="M827.500 524.2h9" stroke="#e9ebf1" stroke-width="1.500"/><path d="M822.600 512.300l1-.3v3.400M822.400 517.600h1.700l-1.700 2h1.800M822.400 522.500h1.700v1.600h-1.200 1.200v1.600h-1.700" stroke="#e9ebf1" stroke-width=".7" fill="none"/><path d="M872.500 519.500v4.500a1.200 1.200 0 0 1-1.200 1.200h-9.300a1.200 1.200 0 0 1-1.200-1.200v-9.800a1.200 1.200 0 0 1 1.200-1.200h8.500" fill="none" stroke="#e9ebf1" stroke-width="1.400"/><path d="M863.800 518.200l3.200 3.200 6.800-7.400" fill="none" stroke="#e9ebf1" stroke-width="1.500"/><path d="M898.600 513.4h12.6" stroke="#e9ebf1" stroke-width="1.200"/><path d="M898.600 516.9h9.5" stroke="#e9ebf1" stroke-width="1.200"/><path d="M898.600 520.4h12.6" stroke="#e9ebf1" stroke-width="1.200"/><path d="M898.600 523.9h9.5" stroke="#e9ebf1" stroke-width="1.200"/><path d="M949.600 513.400h14.500M955.300 516.900h8.800M955.300 520.400h8.800M949.600 523.900h14.500" stroke="#e9ebf1" stroke-width="1.300"/><path d="M949.600 515.800l3.600 2.900-3.600 2.900z" fill="#e9ebf1"/><path d="M955.300 515.200h8.800M955.300 518.700h8.800M955.300 522.200h8.800" stroke="#e9ebf1" stroke-width=".9" opacity=".75"/><circle cx="1020" cy="519" r="6.300" fill="none" stroke="#e9ebf1" stroke-width="1.200"/><circle cx="1017.700" cy="517" r="1" fill="#e9ebf1"/><circle cx="1022.300" cy="517" r="1" fill="#e9ebf1"/><path d="M1016.300 520.300h7.400a3.700 3.400 0 0 1-7.400 0z" fill="#e9ebf1"/><g transform="rotate(-45 1072 519)" fill="none" stroke="#e9ebf1" stroke-width="1.200"><rect x="1063.200" y="516.500" width="9.800" height="5" rx="2.500"/><rect x="1071" y="516.500" width="9.800" height="5" rx="2.500"/></g><rect x="1103.600" y="513.200" width="13" height="11.600" fill="none" stroke="#e9ebf1" stroke-width="1.100"/><path d="M1105 523.400l3.400-4.600 2.400 2.400 2.200-3 2.800 3.600v1.600z" fill="#e9ebf1"/><circle cx="1113.800" cy="515.800" r="1" fill="#e9ebf1"/><rect x="1155" y="513.800" width="13.800" height="10.400" rx="2" fill="#e9ebf1"/><path d="M1160 516.300l4.600 2.700-4.600 2.700z" fill="#1f2536"/><rect x="1207.500" y="513.100" width="13" height="11.800" fill="none" stroke="#e9ebf1" stroke-width="1.100"/><path d="M1211.800 513v12M1216.200 513v12M1207.500 517h13M1207.500 521h13" stroke="#e9ebf1" stroke-width=".8"/><path d="M1263 515.800l-3 3.200 3 3.200M1269.200 515.800l3 3.200-3 3.200M1267.200 515l-2.400 8" fill="none" stroke="#e9ebf1" stroke-width="1.200"/><path d="M1296.800 513.400h14.400M1296.800 524.600h14.400" stroke="#e9ebf1" stroke-width="1.300"/><path d="M1296.800 519h3.600M1302.200 519h3.600M1307.600 519h3.600" stroke="#e9ebf1" stroke-width="1.300"/><path d="M1349.300 516.800A5.600 5.600 0 1 1 1356.600 525.400" fill="none" stroke="#e9ebf1" stroke-width="1.500"/><path d="M1346 512.800l.6 5.800 5.200-2.600z" fill="#e9ebf1"/><path d="M1395.100 516.800A5.600 5.600 0 1 0 1387.800 525.400" fill="none" stroke="#e9ebf1" stroke-width="1.500"/><path d="M1398.400 512.800l-.6 5.800-5.200-2.600z" fill="#e9ebf1"/><path d="M1433.800 516.500v-3.700h3.700M1442.500 512.800h3.700v3.700M1446.200 521.500v3.700h-3.700M1437.500 525.200h-3.700v-3.700" fill="none" stroke="#e9ebf1" stroke-width="1.600"/></svg>
  <div class="t" style="left:150px;top:350px;font-size:13.500px;color:#eef0f5;font-family:'Liberation Serif','Noto Serif CJK SC',serif">正文</div>
  <div class="t" style="left:546px;top:349px;font-size:14px;color:#eef0f5;letter-spacing:-.4px">默认字号</div>
  <div class="t" style="left:634px;top:349px;font-size:14px;color:#eef0f5;letter-spacing:-.4px">默认字体</div>
  <div class="t" style="left:722px;top:349px;font-size:14px;color:#eef0f5;letter-spacing:-.4px">默认行高</div>
  <div class="lbl" style="top:688px;left:0px;width:118px">文件上传</div>
  <div class="abs dots" style="left:140px;top:684px;width:85px;height:30px;background-color:#161b28;border-radius:3px"></div>
  <svg class="abs" style="left:150px;top:693px" width="11" height="12" viewBox="0 0 11 12"><path d="M5.500 9.500V2M2.300 5l3.200-3.200L8.700 5M1 11h9" fill="none" stroke="#3875ff" stroke-width="1.100"/></svg>
  <div class="t" style="left:167px;top:689px;font-size:12px;color:#fff">上传文件</div>
  <div class="t" style="left:235px;top:689px;font-size:12px;color:#fff">支持扩展名：<span style="letter-spacing:.32px">.rar .zip .doc .docx .pdf .jpg...</span></div>
  <div class="abs" style="left:644px;top:757px;width:92px;height:32px;border:1px solid #3875ff;border-radius:2px;color:#3875ff;text-align:center;line-height:30px;font-size:14px">取消</div>
  <div class="abs" style="left:748px;top:757px;width:92px;height:32px;background:#3875ff;border-radius:2px;color:#fff;text-align:center;line-height:32px;font-size:14px">确认</div>
</div>

</div>
</body>
</html>
